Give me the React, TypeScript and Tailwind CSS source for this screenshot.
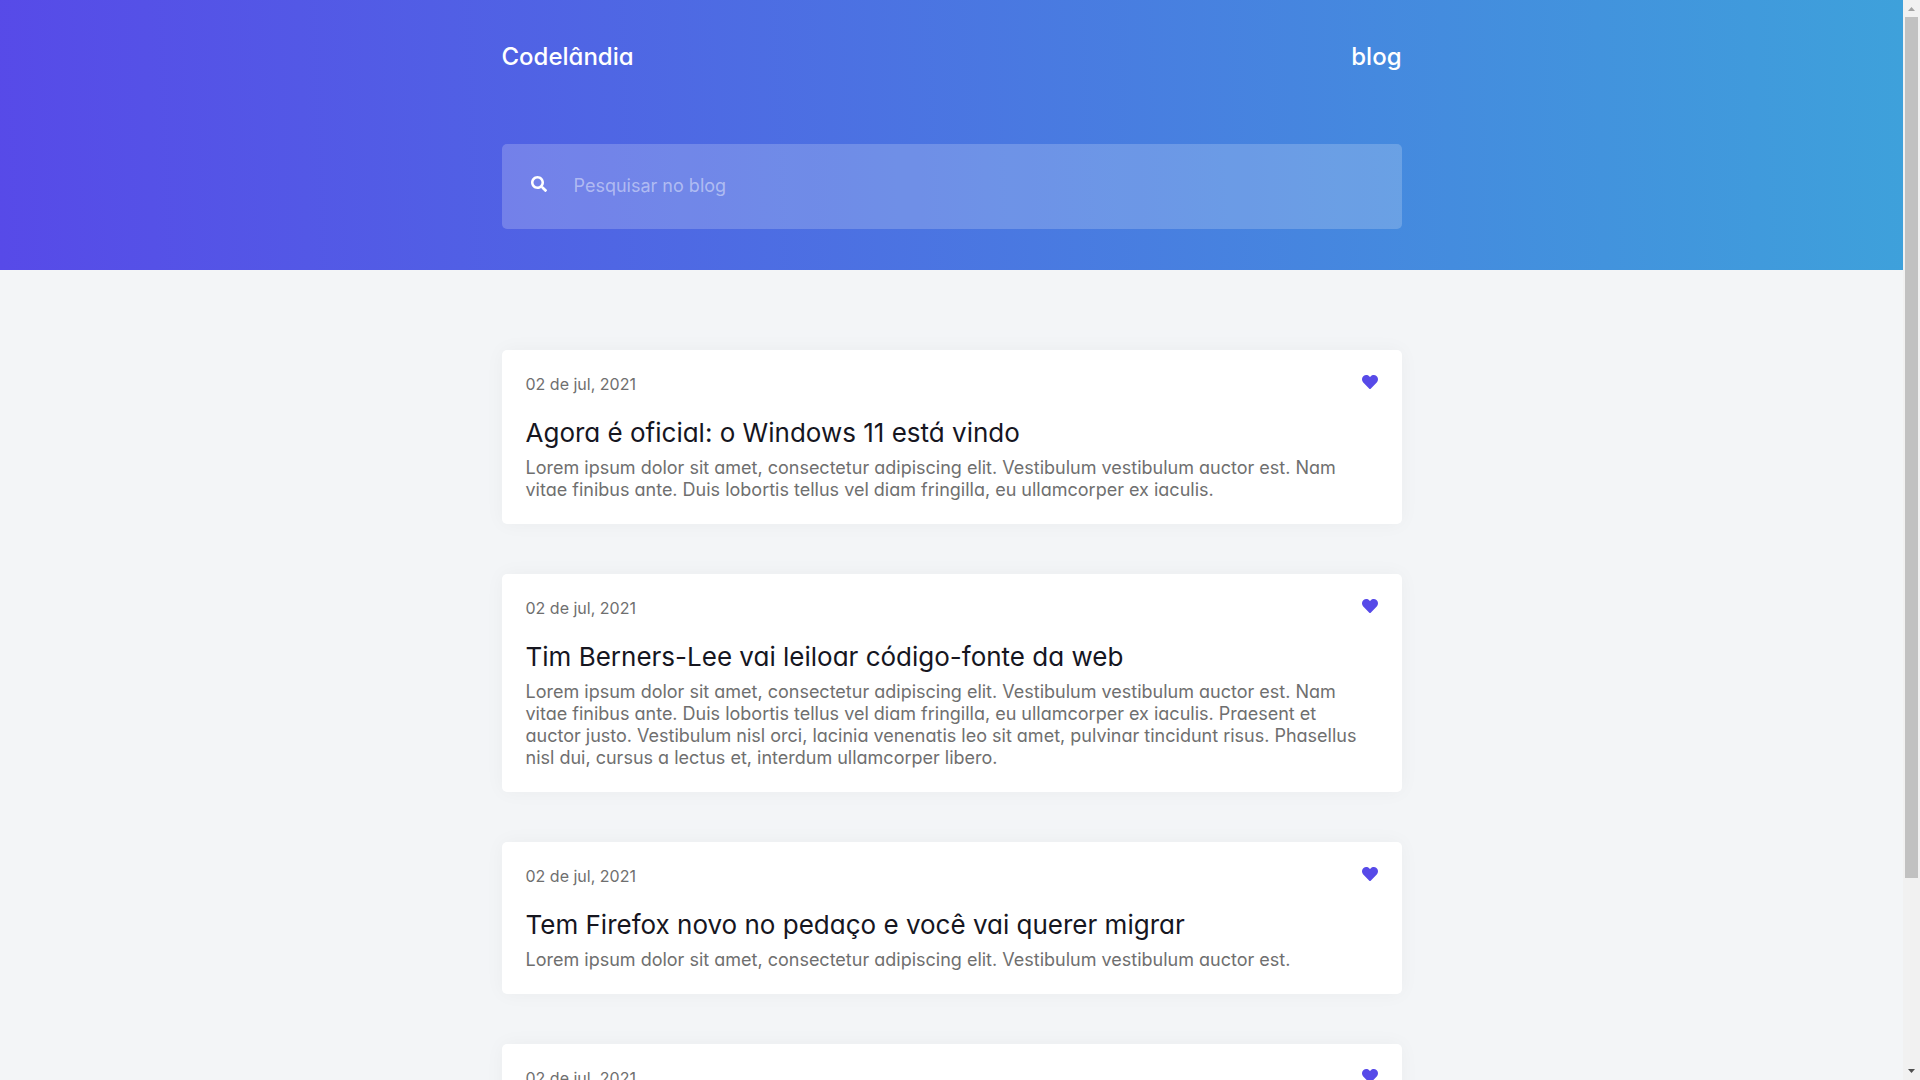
import { FaHeart, FaSearch } from "react-icons/fa";

type Post = { date: string; title?: string; text?: string };

const posts: Post[] = [
  {
    date: "02 de jul, 2021",
    title: "Agora é oficial: o Windows 11 está vindo",
    text: "Lorem ipsum dolor sit amet, consectetur adipiscing elit. Vestibulum vestibulum auctor est. Nam vitae finibus ante. Duis lobortis tellus vel diam fringilla, eu ullamcorper ex iaculis.",
  },
  {
    date: "02 de jul, 2021",
    title: "Tim Berners-Lee vai leiloar código-fonte da web",
    text: "Lorem ipsum dolor sit amet, consectetur adipiscing elit. Vestibulum vestibulum auctor est. Nam vitae finibus ante. Duis lobortis tellus vel diam fringilla, eu ullamcorper ex iaculis. Praesent et auctor justo. Vestibulum nisl orci, lacinia venenatis leo sit amet, pulvinar tincidunt risus. Phasellus nisl dui, cursus a lectus et, interdum ullamcorper libero.",
  },
  {
    date: "02 de jul, 2021",
    title: "Tem Firefox novo no pedaço e você vai querer migrar",
    text: "Lorem ipsum dolor sit amet, consectetur adipiscing elit. Vestibulum vestibulum auctor est.",
  },
  {
    date: "02 de jul, 2021",
  },
];

function Header() {
  return (
    <header className="bg-[linear-gradient(88deg,#574ae8_0%,#3ea1db_100%)] pt-[41px] pb-[41px]">
      <div className="mx-auto w-full max-w-[900px]">
        <div className="flex items-center justify-between text-2xl leading-8 font-medium text-white">
          <h1>Codelândia</h1>
          <a href="#blog">blog</a>
        </div>
        <div className="mt-[71px] flex h-[85px] items-center rounded-[5px] bg-white/20 px-[29px]">
          <label htmlFor="search" aria-label="Pesquisar no blog" className="mb-1.5 shrink-0 text-white">
            <FaSearch className="size-4" aria-hidden="true" />
          </label>
          <input
            id="search"
            type="text"
            placeholder="Pesquisar no blog"
            className="ml-[27px] min-w-0 flex-1 bg-transparent pb-0.5 text-[18px] leading-7 text-white outline-none [font-feature-settings:normal] placeholder:text-white/45"
          />
        </div>
      </div>
    </header>
  );
}

function PostCard({ date, title, text }: Post) {
  return (
    <article className="rounded-[5px] bg-white px-6 pt-6 pb-[23px] shadow-[0_0_20px_rgba(0,0,0,0.04)]">
      <div className="flex items-start justify-between">
        <time dateTime="2021-07-02" className="text-[16px] leading-5 text-[#6f6f6f]">
          {date}
        </time>
        <button type="button" aria-label="Curtir" className="text-[#574ae8]">
          <FaHeart className="size-4" aria-hidden="true" />
        </button>
      </div>
      {title && <h2 className="mt-[23px] text-[26px] leading-8 text-[#16161f]">{title}</h2>}
      {text && <p className="mt-2 pr-2 text-[18px] leading-[22px] text-[#6f6f6f]">{text}</p>}
    </article>
  );
}

function ScrollTrack() {
  return (
    <div className="flex w-[17px] shrink-0 flex-col items-center bg-[#f1f1f1]" aria-hidden="true">
      <svg className="size-[17px] shrink-0" viewBox="0 0 17 17" fill="#a3a3a3">
        <path d="M5 11 8.500 7 12 11z" />
      </svg>
      <div className="min-h-0 w-full flex-1 px-0.5">
        <div className="h-[82.300%] bg-[#c1c1c1]" />
      </div>
      <svg className="size-[17px] shrink-0" viewBox="0 0 17 17" fill="#505050">
        <path d="M5 6 8.500 10 12 6z" />
      </svg>
    </div>
  );
}

export default function App() {
  return (
    <div className="flex h-screen bg-[#f3f5f7] font-['Inter',sans-serif] [font-feature-settings:'cv11']">
      <div className="min-w-0 flex-1 overflow-hidden">
        <Header />
        <main className="mx-auto flex w-full max-w-[900px] flex-col gap-[50px] py-20">
          {posts.map((post, i) => (
            <PostCard key={i} {...post} />
          ))}
        </main>
      </div>
      <ScrollTrack />
    </div>
  );
}
